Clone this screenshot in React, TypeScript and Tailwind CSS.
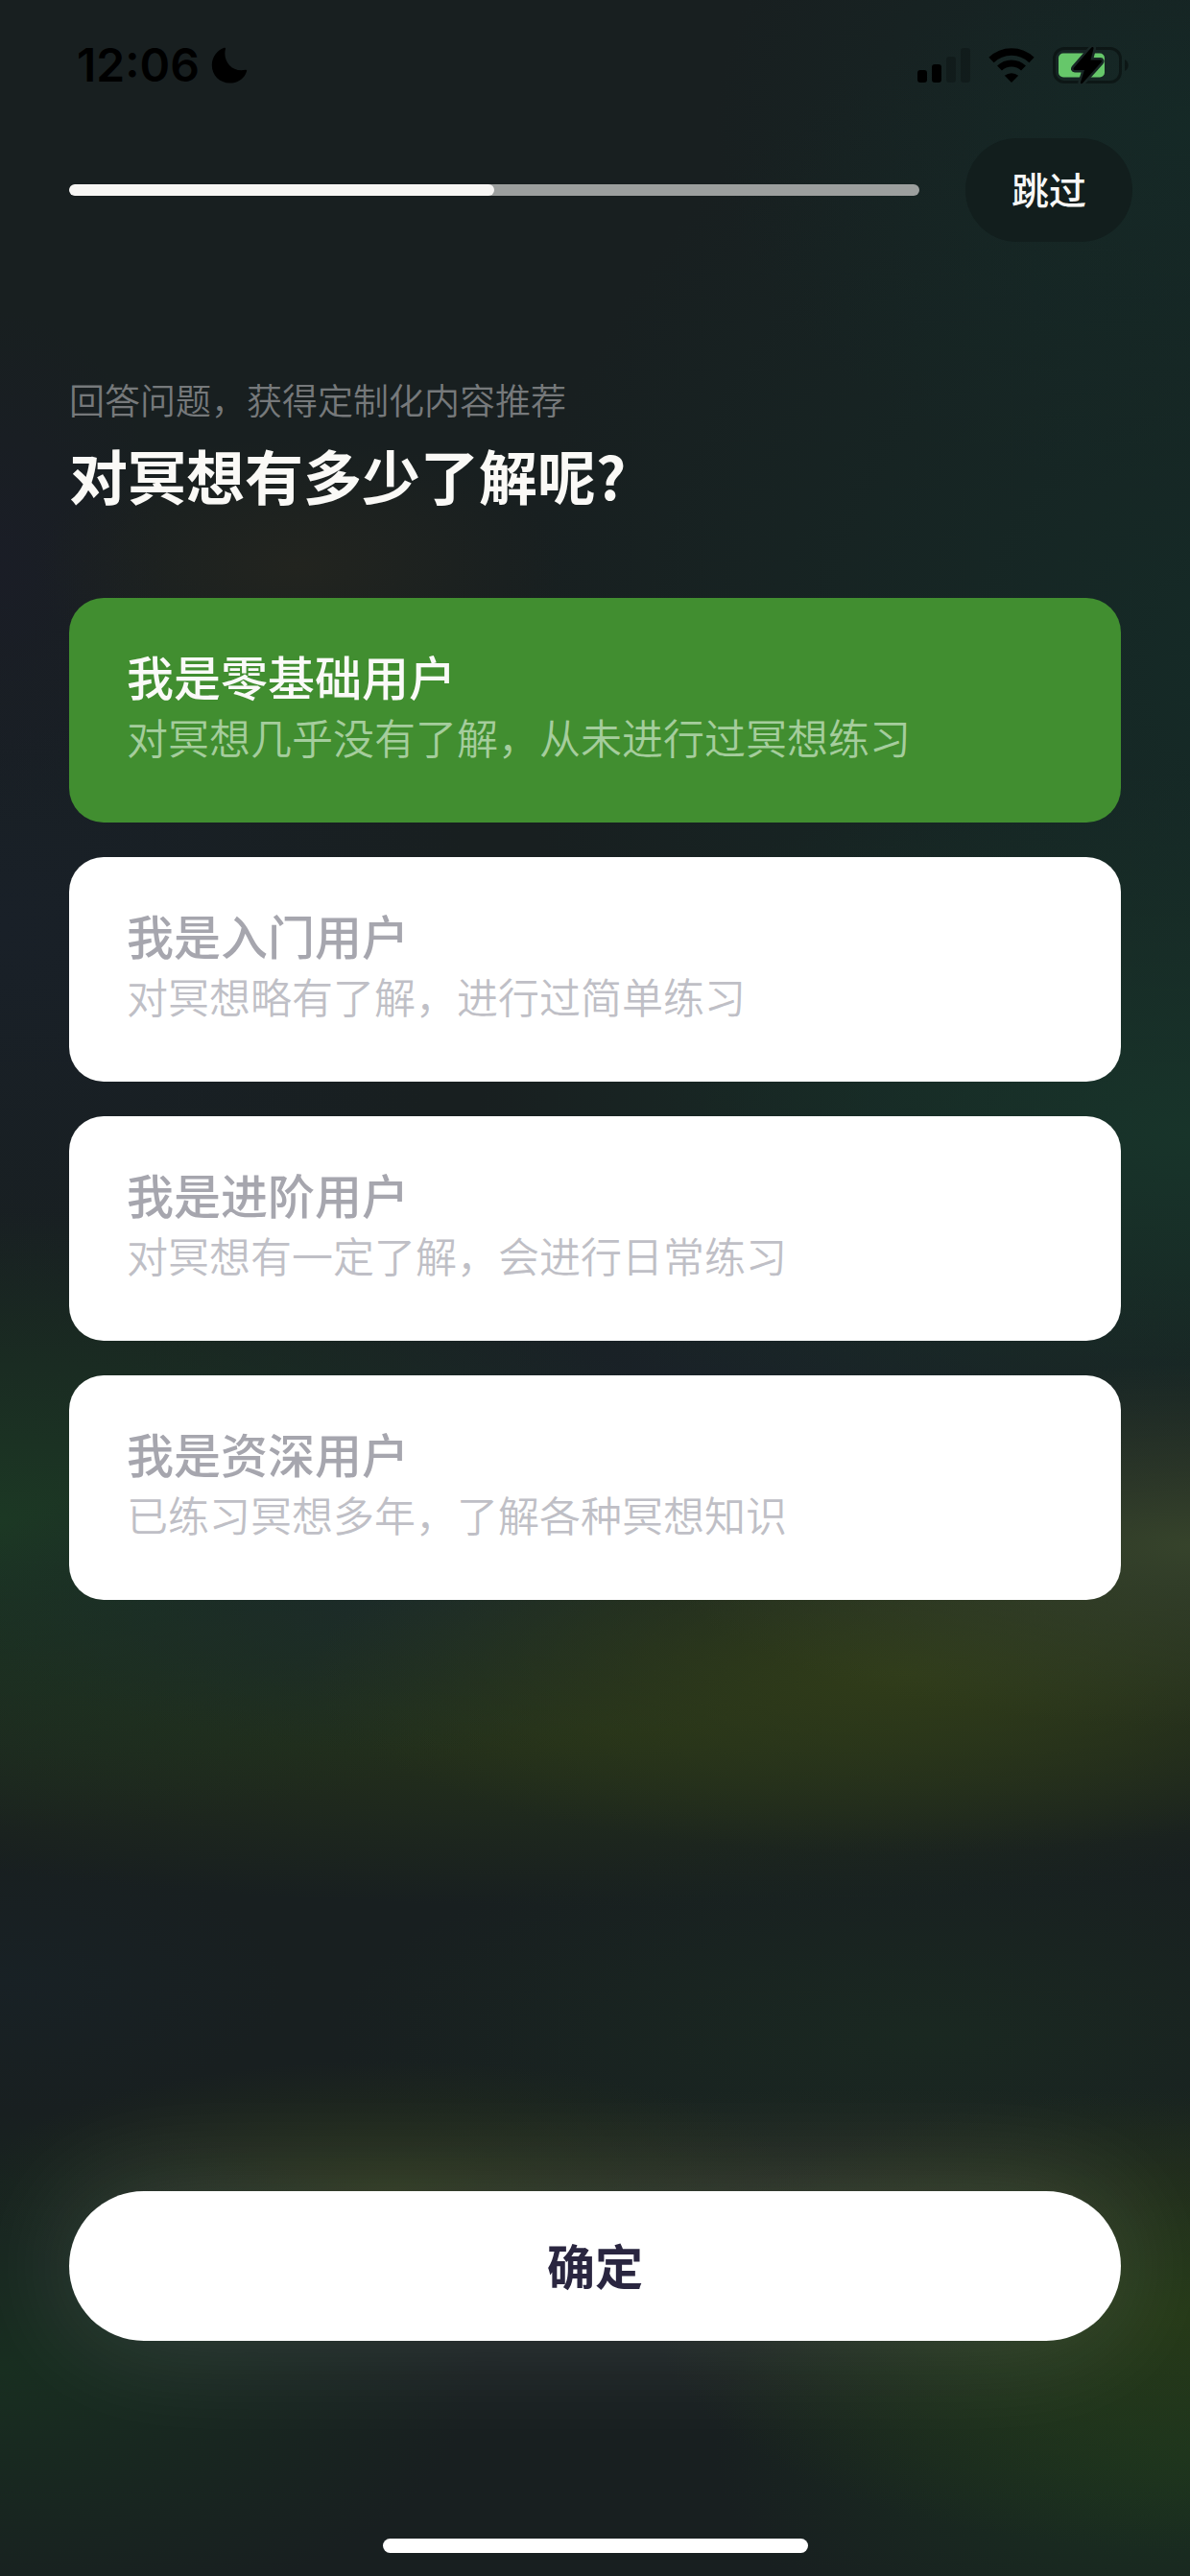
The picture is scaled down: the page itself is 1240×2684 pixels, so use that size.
import { useState } from "react";
import clsx from "clsx";

const LEVELS = [
  { id: "beginner", title: "我是零基础用户", desc: "对冥想几乎没有了解，从未进行过冥想练习" },
  { id: "starter", title: "我是入门用户", desc: "对冥想略有了解，进行过简单练习" },
  { id: "advanced", title: "我是进阶用户", desc: "对冥想有一定了解，会进行日常练习" },
  { id: "expert", title: "我是资深用户", desc: "已练习冥想多年，了解各种冥想知识" },
];

function Backdrop() {
  return (
    <div className="absolute inset-0 -z-10 overflow-hidden bg-[#181f20]" aria-hidden="true">
      <div className="absolute inset-0 bg-[radial-gradient(65%_28%_at_108%_26%,#152b27,transparent),radial-gradient(40%_14%_at_100%_5%,#152826,transparent)]" />
      <div className="absolute inset-0 bg-[radial-gradient(22%_5%_at_25%_22%,#22241f,transparent),radial-gradient(14%_10%_at_0%_22%,#1a1d26,transparent),radial-gradient(40%_16%_at_0%_36%,#192028,transparent)]" />
      <div className="absolute inset-0 bg-[radial-gradient(60%_14%_at_100%_44%,#18342a,transparent),radial-gradient(50%_9%_at_60%_55%,#1a2229,transparent)]" />
      <div className="absolute inset-0 bg-[radial-gradient(85%_7%_at_50%_67%,#25321a,transparent)]" />
      <div className="absolute inset-0 bg-[radial-gradient(60%_12%_at_0%_59%,#1c3824,transparent)]" />
      <div className="absolute inset-0 bg-[radial-gradient(40%_6%_at_36%_62%,#1c2b29,transparent)]" />
      <div className="absolute inset-0 bg-[radial-gradient(50%_7%_at_76%_65%,#303c19,transparent)]" />
      <div className="absolute inset-0 bg-[radial-gradient(45%_7%_at_100%_60%,#36432b,transparent)]" />
      <div className="absolute inset-0 bg-[radial-gradient(50%_8%_at_78%_79%,#1a2821,transparent),radial-gradient(24%_5%_at_0%_77%,#182125,transparent)]" />
      <div className="absolute inset-0 bg-[radial-gradient(35%_5%_at_33%_85%,#26311a,transparent),radial-gradient(50%_5%_at_75%_86%,#262d1f,transparent)]" />
      <div className="absolute inset-0 bg-[radial-gradient(45%_9%_at_100%_90%,#263a18,transparent),radial-gradient(40%_10%_at_100%_95%,#1a3320,transparent)]" />
      <div className="absolute inset-0 bg-[radial-gradient(40%_10%_at_0%_92%,#182e20,transparent)]" />
    </div>
  );
}

function SignalIcon() {
  return (
    <svg width="56" height="36" viewBox="0 0 56 36" aria-hidden="true">
      <rect x="0" y="23" width="10" height="13" rx="3" />
      <rect x="15" y="17" width="10" height="19" rx="3" />
      <rect x="30" y="9" width="10" height="27" rx="3" opacity="0.22" />
      <rect x="45" y="0" width="10" height="36" rx="3" opacity="0.22" />
    </svg>
  );
}

function WifiIcon() {
  return (
    <svg width="48" height="36" viewBox="0 0 48 36" fill="none" stroke="currentColor" aria-hidden="true">
      <path d="M3 12.5a30 30 0 0 1 42 0" strokeWidth="7.5" />
      <path d="M11.5 21a18 18 0 0 1 25 0" strokeWidth="7" />
      <path d="M16.8 28.8a11.2 11.2 0 0 1 14.4 0L24 36z" fill="currentColor" stroke="none" />
    </svg>
  );
}

function BatteryIcon() {
  return (
    <svg width="80" height="40" viewBox="0 0 80 40" aria-hidden="true">
      <rect x="2.5" y="2.5" width="69" height="35" rx="10.5" fill="none" stroke="#000" strokeOpacity="0.4" strokeWidth="3" />
      <path d="M76 14c5 2 5 10 0 12z" opacity="0.4" />
      <rect x="7" y="7.5" width="48" height="25" rx="5" fill="#66c76a" />
      <path
        d="M41 1.800 23 22.500c-1 1.200-.6 2.500 1 2.500h10L30 37.500c-.5 1.800 1 2.300 2.200 1L51.500 17c1-1.200.6-2.500-1-2.500H40.500L43.500 2.800c.4-1.800-1.300-2.300-2.500-1z"
        stroke="#182625"
        strokeWidth="5"
        strokeLinejoin="round"
        paintOrder="stroke"
      />
    </svg>
  );
}

function StatusBar() {
  return (
    <div className="flex h-[136px] items-center justify-between pl-20 pr-16 text-black">
      <div className="flex items-center gap-3">
        <span className="font-['Inter'] text-[48px] font-semibold leading-none">12:06</span>
        <svg width="38" height="38" viewBox="0 0 38 38" aria-hidden="true">
          <path d="M13.500.8c1-.4 1.800.4 1.400 1.400C12 14 21 26.500 35.500 23.800c1.300-.2 2 .6 1.500 1.700C34.500 33 27.500 37.500 19.500 37.500 9 37.500.8 29.500.8 19 .8 10.500 6 3.500 13.500.8z" />
        </svg>
      </div>
      <div className="flex items-center gap-[18px]">
        <SignalIcon />
        <WifiIcon />
        <BatteryIcon />
      </div>
    </div>
  );
}

export default function App() {
  const [selected, setSelected] = useState("beginner");
  const progress = 50;

  return (
    <div className="relative isolate flex min-h-screen flex-col font-['Noto_Sans_CJK_SC',sans-serif]">
      <Backdrop />
      <StatusBar />

      <header className="flex items-center gap-12 pl-[72px] pr-[60px] pt-2">
        <div
          className="h-3 flex-1 overflow-hidden rounded-full bg-[#9c9f9e]"
          role="progressbar"
          aria-label="进度"
          aria-valuenow={progress}
          aria-valuemin={0}
          aria-valuemax={100}
        >
          <div className="h-full rounded-full bg-[#f7f6f4]" style={{ width: `${progress}%` }} />
        </div>
        <button type="button" className="h-[108px] w-[174px] rounded-full bg-[#121e1d] pb-1 text-[39px] font-medium text-[#f7f7f6]">
          跳过
        </button>
      </header>

      <main className="flex flex-1 flex-col px-[72px]">
        <p className="mt-[137px] text-[37px] font-[350] leading-[54px] text-[#76797b]">回答问题，获得定制化内容推荐</p>
        <h1 className="mt-3 text-[61px] font-bold leading-[80px] text-[#faf9f6]">对冥想有多少了解呢?</h1>

        <fieldset className="mt-22 flex flex-col gap-9">
          {LEVELS.map((level) => {
            const active = level.id === selected;
            return (
              <label
                key={level.id}
                className={clsx(
                  "flex h-[234px] cursor-pointer flex-col rounded-[36px] px-[60px] pt-12",
                  active ? "bg-[#418e30]" : "bg-white"
                )}
              >
                <input
                  type="radio"
                  name="level"
                  value={level.id}
                  checked={active}
                  onChange={() => setSelected(level.id)}
                  className="sr-only"
                />
                <span className={clsx("text-[49px] font-medium leading-[66px]", active ? "text-[#fafaf8]" : "text-[#a6a6ae]")}>
                  {level.title}
                </span>
                <span className={clsx("text-[43px] font-[350] leading-[60px]", active ? "text-[#a5cd9d]" : "text-[#bfbfc6]")}>
                  {level.desc}
                </span>
              </label>
            );
          })}
        </fieldset>

        <button
          type="button"
          className="mb-[206px] mt-auto h-[156px] w-full rounded-full bg-white pb-1 text-[50px] font-bold text-[#2a2640] shadow-[0_0_120px_rgba(255,255,255,0.14)]"
        >
          确定
        </button>
      </main>

      <div className="mx-auto mb-6 h-[15px] w-[443px] rounded-full bg-white" />
    </div>
  );
}
